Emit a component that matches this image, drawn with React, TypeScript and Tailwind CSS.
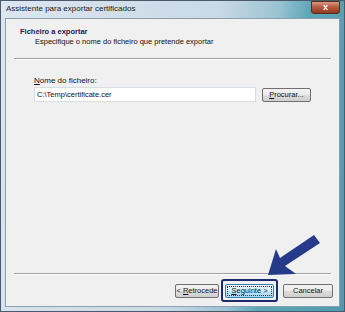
export default function App() {
  const font = { fontFamily: '"Liberation Sans", Arial, sans-serif' };

  return (
    <div
      className="relative w-[345px] h-[312px] overflow-hidden border border-[#4a5a6a] bg-[linear-gradient(100deg,#dbe6f0_0%,#c9d9e6_55%,#9cc3d3_70%,#5da6b8_78%,#4f9aad_100%)]"
      style={font}
    >
      {/* TITLE BAR */}
      <div className="flex items-start h-[17px]">
        <span className="pl-[5px] pt-[3px] text-[8px] leading-[10px] text-[#1a1a1a]">
          Assistente para exportar certificados
        </span>
        <div className="ml-auto mr-[4px] w-[29px] h-[13px] rounded-b-[3px] border border-[#5a2a1a] bg-[linear-gradient(#d69a86,#b4553c_50%,#8f3a24)] flex items-center justify-center text-white text-[9px] font-bold leading-none">
          x
        </div>
      </div>

      {/* CLIENT AREA */}
      <div className="mx-[4px] h-[289px] border border-[#8da0b0] bg-[#f0f0f0] flex flex-col text-[#111] text-[7.5px]">
        {/* HEADER */}
        <div className="px-[14px] pt-[8px] h-[39px]">
          <p className="font-bold text-[7.5px] leading-[10px] text-[#1b2050]">Ficheiro a exportar</p>
          <p className="pl-[15px] text-[7.5px] leading-[10px]">
            Especifique o nome do ficheiro que pretende exportar
          </p>
        </div>
        <div className="mx-[8px] h-px bg-[#a0a0a0] border-b border-white box-content" />

        {/* BODY */}
        <div className="pl-[28px] pt-[16px] flex-1">
          <p className="text-[8px] leading-[10px]">
            <span className="underline">N</span>ome do ficheiro:
          </p>
          <div className="flex items-center gap-[6px] mt-[1px]">
            <div className="w-[222px] h-[15px] bg-white border border-[#d8dde3] flex items-center px-[2px] text-[7.5px]">
              C:\Temp\certificate.cer
            </div>
            <button className="w-[49px] h-[14px] rounded-[2px] border border-[#707070] bg-[linear-gradient(#f2f2f2,#ebebeb_50%,#dddddd_51%,#cfcfcf)] text-[7.5px] leading-none">
              <span className="underline">P</span>rocurar...
            </button>
          </div>
        </div>

        <div className="mx-[8px] h-px bg-[#a0a0a0] border-b border-white box-content" />

        {/* FOOTER */}
        <div className="h-[31px] flex items-center justify-end pr-[6px]">
          <button className="w-[44px] h-[14px] rounded-[2px] border border-[#707070] bg-[linear-gradient(#f2f2f2,#ebebeb_50%,#dddddd_51%,#cfcfcf)] text-[7.5px] leading-none">
            &lt; <span className="underline">R</span>etrocede
          </button>
          <div className="ml-[2px] w-[57px] h-[23px] rounded-[3px] border-2 border-[#1e2a6e] flex items-center justify-center">
            <button className="w-[49px] h-[14px] rounded-[2px] border border-[#3c7fb1] bg-[linear-gradient(#eaf6fd,#d9f0fc_50%,#bee6fd_51%,#a7d9f5)] text-[7.5px] leading-none outline outline-1 outline-dotted outline-offset-[-3px] outline-[#333]">
              <span className="underline">S</span>eguinte &gt;
            </button>
          </div>
          <button className="ml-[5px] w-[50px] h-[14px] rounded-[2px] border border-[#707070] bg-[linear-gradient(#f2f2f2,#ebebeb_50%,#dddddd_51%,#cfcfcf)] text-[7.5px] leading-none">
            Cancelar
          </button>
        </div>
      </div>

      {/* ARROW */}
      <svg className="absolute left-0 top-0" width="345" height="312" viewBox="0 0 345 312">
        <polygon
          points="267,274 275,248 279,257 313,234 319,242 284,265 295,273"
          fill="#263a8a"
        />
      </svg>
    </div>
  );
}
